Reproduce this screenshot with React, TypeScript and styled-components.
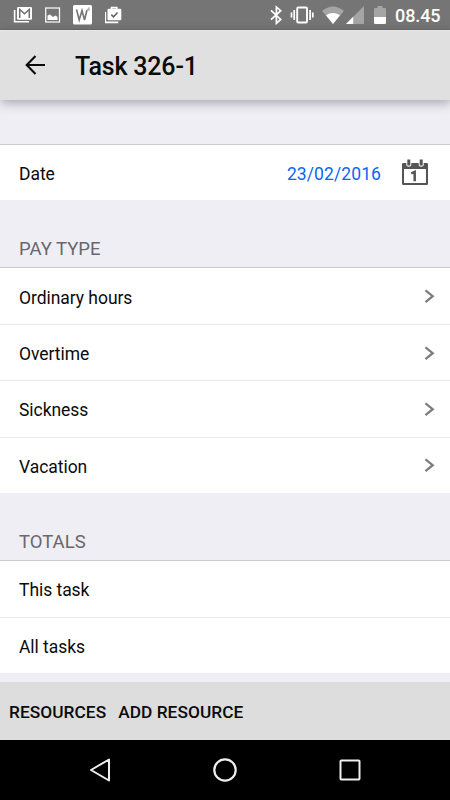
import React from 'react';
import styled, { createGlobalStyle } from 'styled-components';

const GlobalStyle = createGlobalStyle`
  * { box-sizing: border-box; }
  html, body { margin: 0; background: #efeef4; }
  body, button { font-family: Roboto, "Liberation Sans", sans-serif; }
`;

const Screen = styled.div`
  width: 450px;
  height: 800px;
  overflow: hidden;
  display: flex;
  flex-direction: column;
  background: #efeef4;
  color: #0b0b0b;
`;

const StatusBar = styled.div`
  flex: none;
  height: 30px;
  display: flex;
  justify-content: space-between;
  padding: 0 9px 0 13px;
  background: #757575;
  border-bottom: 1px solid #6c696c;
`;

const IconGroup = styled.div<{ $gap: number }>`
  display: flex;
  gap: ${(p) => p.$gap}px;
  height: 30px;
`;

const Clock = styled.span`
  width: 46px;
  line-height: 31px;
  font-size: 18px;
  font-weight: 500;
  letter-spacing: -0.1px;
  color: #fff;
  white-space: nowrap;
`;

const Glyph = styled.svg`
  display: block;
  flex: none;
`;

const AppBar = styled.header`
  flex: none;
  position: relative;
  height: 70px;
  display: flex;
  align-items: center;
  padding: 0 25px;
  gap: 30px;
  background: #e0e0e0;
  border-top: 1px solid #e8e8e8;
  box-shadow: 1px 3px 10px rgba(60, 55, 70, 0.4);
`;

const Title = styled.h1`
  margin: 0;
  padding-top: 2px;
  font-size: 25px;
  font-weight: 500;
  line-height: 30px;
  letter-spacing: -0.18px;
`;

const IconButton = styled.button`
  display: flex;
  border: 0;
  padding: 0 0 2px;
  background: none;
`;

const Content = styled.main`
  flex: 1;
  min-height: 0;
  padding-top: 44px;
`;

const List = styled.div`
  border-top: 1px solid #cbcbcd;
  background: #fff;
`;

const Row = styled.div<{ $height?: number }>`
  height: ${(p) => p.$height ?? 56.2}px;
  display: flex;
  align-items: center;
  padding: 2px 15px 0 19px;
  font-size: 17.5px;
  & + & { border-top: 1px solid #e9e9ee; }
`;

const Label = styled.span`
  flex: 1;
  padding-top: 1px;
  letter-spacing: -0.05px;
`;

const DateValue = styled.span`
  margin-right: 21px;
  font-size: 17.5px;
  letter-spacing: 0.1px;
  color: #0a66f5;
`;

const CalendarButton = styled(IconButton)`
  margin-right: 6px;
  padding: 0 0 3px;
`;

const SectionTitle = styled.h2`
  height: 67px;
  margin: 0;
  padding: 0 19px 7px;
  display: flex;
  align-items: flex-end;
  font-size: 18.5px;
  line-height: 21px;
  font-weight: 400;
  color: #68686c;
`;

const Footer = styled.footer`
  flex: none;
  height: 58px;
  display: flex;
  align-items: center;
  gap: 12px;
  padding: 1px 9px 0;
  background: #dddddd;
`;

const Action = styled.button`
  border: 0;
  padding: 0;
  background: none;
  color: #0b0b0b;
  font-size: 17.3px;
  font-weight: 500;
  letter-spacing: 0.05px;
  white-space: nowrap;
`;

const NavBar = styled.nav`
  flex: none;
  height: 60px;
  display: flex;
  align-items: center;
  justify-content: space-between;
  padding: 0 85px;
  background: #000;
`;

const Chevron = () => (
  <Glyph width="11" height="18" viewBox="0 0 11 18" fill="none" stroke="#7d7d7d" strokeWidth="2.3">
    <path d="M1.5 2.3 8.700 8.200 1.500 14.100" />
  </Glyph>
);

const Calendar = () => (
  <Glyph width="27" height="27" viewBox="0 0 27 27">
    <path
      fill="#555"
      fillRule="evenodd"
      d="M1.200 4H4.300v2c0 2.200 5 2.200 5 0V4h7.400v2c0 2.200 5 2.200 5 0V4h3.100a1.200 1.200 0 0 1 1.200 1.200v19.600a1.200 1.200 0 0 1-1.200 1.200h-23.600A1.200 1.200 0 0 1 0 24.800V5.200A1.200 1.200 0 0 1 1.200 4ZM2 10V24h22V10Z"
    />
    <path d="M6.800 0.500v6M19.200 0.500v6" stroke="#555" strokeWidth="3" />
    <path d="M9.300 14.300 12.700 12.800v9.400" fill="none" stroke="#555" strokeWidth="2.500" />
  </Glyph>
);

const NotificationIcons = () => (
  <IconGroup $gap={12}>
    <Glyph width="20" height="30" viewBox="13 0 20 30" fill="none">
      <path d="M14.600 10v11.800H29" stroke="#fff" strokeWidth="1.600" />
      <rect x="17" y="7" width="15" height="12.800" rx="1.200" fill="#fff" />
      <path d="M19.700 18V9.500l4.800 4.200 4.800-4.200V18" stroke="#707070" strokeWidth="1.500" />
    </Glyph>
    <Glyph width="16" height="30" viewBox="45 0 16 30" fill="none">
      <rect x="45.700" y="8" width="13.800" height="14" stroke="#f4f4f4" strokeWidth="1.300" />
      <path d="M47.500 20v-4.500l2.500-1 3 2.500 2.500-1.500 2 1.500v3Z" fill="#fff" />
    </Glyph>
    <Glyph width="20" height="30" viewBox="73 0 20 30">
      <rect x="73" y="5" width="19" height="19.600" rx="1.500" fill="#fff" />
      <path d="M76.500 9.500 79.200 20 82 10.500 84.500 20 87 10" fill="none" stroke="#757575" strokeWidth="1.600" />
      <path d="M89 7.500 87.300 9.800h2.200M89 7.500v3.500" fill="none" stroke="#999" strokeWidth="0.800" />
    </Glyph>
    <Glyph width="20" height="30" viewBox="105 0 20 30" fill="none">
      <path d="M105.300 12v10.300h13" stroke="#fff" strokeWidth="1.700" />
      <rect x="107.500" y="8.800" width="13.800" height="11.500" rx="1.200" fill="#fff" />
      <path d="M111.500 9.500V7.600h5.300v1.900" stroke="#fff" strokeWidth="1.600" />
      <path d="m111.300 14.600 2.200 2.200 4-4.300" stroke="#606060" strokeWidth="1.500" />
    </Glyph>
  </IconGroup>
);

const SystemIcons = () => (
  <IconGroup $gap={8}>
    <Glyph width="14" height="30" viewBox="267 0 14 30" fill="none" stroke="#fff" strokeWidth="1.700">
      <path d="m270 10.300 9.700 9.200-4.300 3.800V7l4.300 3.700-9.700 9" />
    </Glyph>
    <Glyph width="24" height="30" viewBox="290.500 0 24 30" fill="none" stroke="#fff">
      <rect x="297.700" y="7.500" width="9.800" height="15" rx="1" strokeWidth="1.900" />
      <path d="M294.700 10v10M310.600 10v10M292 12.500v5M313.300 12.500v5" strokeWidth="1.700" />
    </Glyph>
    <Glyph width="43" height="30" viewBox="322 0 43 30">
      <path d="M322 11q11-9 22 0L333 24Z" fill="#a5a5a5" />
      <path d="M326 15.200q7-4.500 14 0L333 24Z" fill="#fff" />
      <path d="M346 24 364 6v18Z" fill="#a5a5a5" />
      <path d="m346 24 7.200-7.200V24Z" fill="#fff" />
    </Glyph>
    <Glyph width="14" height="30" viewBox="373 0 14 30">
      <path d="M374 9q0-1 1-1h2.500V6h5v2h2.500q1 0 1 1v9h-12Z" fill="#a5a5a5" />
      <path d="M374 17h12v6q0 1-1 1h-10q-1 0-1-1Z" fill="#fff" />
    </Glyph>
    <Clock>08.45</Clock>
  </IconGroup>
);

const payTypes = ['Ordinary hours', 'Overtime', 'Sickness', 'Vacation'];
const totals = ['This task', 'All tasks'];

export default function App() {
  return (
    <>
      <GlobalStyle />
      <Screen>
        <StatusBar>
          <NotificationIcons />
          <SystemIcons />
        </StatusBar>
        <AppBar>
          <IconButton aria-label="Back">
            <Glyph width="20" height="20" viewBox="0 0 20 20" fill="none" stroke="#0b0b0b" strokeWidth="2.100">
              <path d="M20 10H2M10.500 1 1.700 10l8.800 9" />
            </Glyph>
          </IconButton>
          <Title>Task 326-1</Title>
        </AppBar>
        <Content>
          <List>
            <Row $height={55}>
              <Label>Date</Label>
              <DateValue>23/02/2016</DateValue>
              <CalendarButton aria-label="Choose date">
                <Calendar />
              </CalendarButton>
            </Row>
          </List>
          <SectionTitle>PAY TYPE</SectionTitle>
          <List>
            {payTypes.map((name) => (
              <Row key={name}>
                <Label>{name}</Label>
                <Chevron />
              </Row>
            ))}
          </List>
          <SectionTitle>TOTALS</SectionTitle>
          <List>
            {totals.map((name) => (
              <Row key={name} $height={56}>
                <Label>{name}</Label>
              </Row>
            ))}
          </List>
        </Content>
        <Footer>
          <Action>RESOURCES</Action>
          <Action>ADD RESOURCE</Action>
        </Footer>
        <NavBar>
          <Glyph width="30" height="30" viewBox="0 0 30 30" fill="none" stroke="#eee" strokeWidth="2" strokeLinejoin="round">
            <path d="M24 4.500v21L6 15Z" />
          </Glyph>
          <Glyph width="30" height="30" viewBox="0 0 30 30" fill="none" stroke="#eee" strokeWidth="2.200">
            <circle cx="15" cy="15" r="10.700" />
          </Glyph>
          <Glyph width="30" height="30" viewBox="0 0 30 30" fill="none" stroke="#eee" strokeWidth="2">
            <rect x="5.500" y="5.500" width="19" height="19" rx="0.800" />
          </Glyph>
        </NavBar>
      </Screen>
    </>
  );
}
